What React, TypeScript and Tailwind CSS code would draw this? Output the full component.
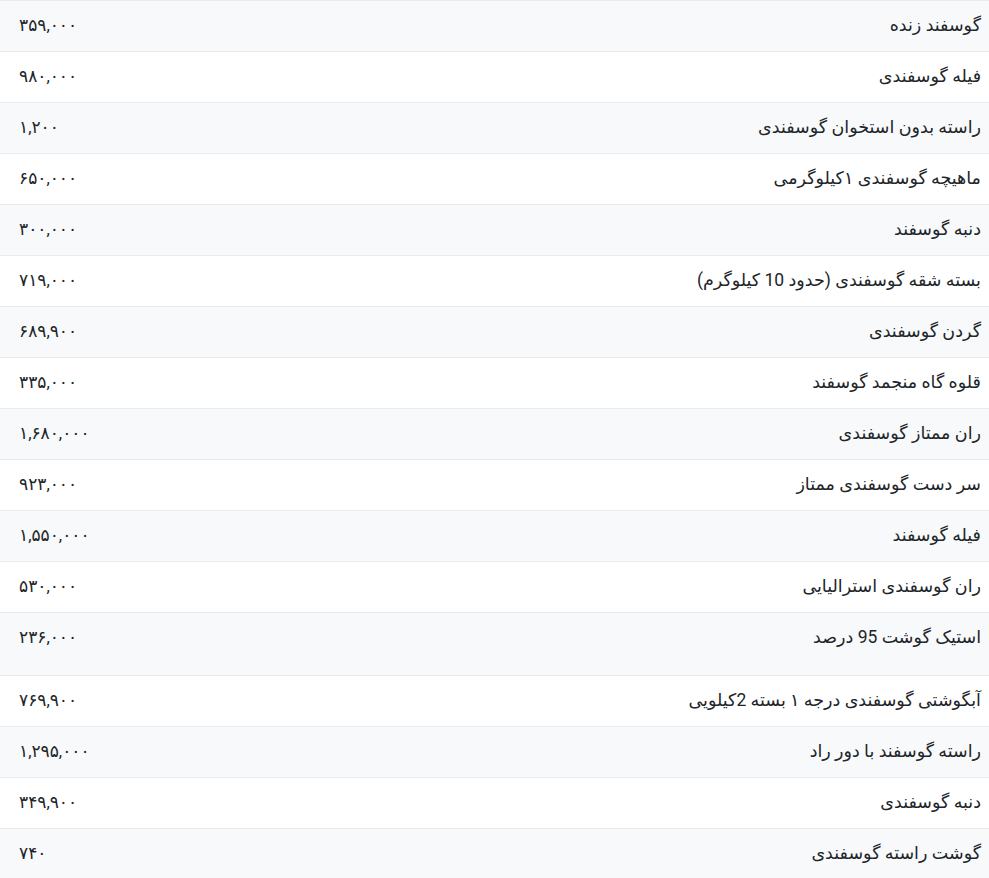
import React from "react";

const rows: { name: string; price: string; tall?: boolean }[] = [
  { name: "گوسفند زنده", price: "۳۵۹,۰۰۰" },
  { name: "فیله گوسفندی", price: "۹۸۰,۰۰۰" },
  { name: "راسته بدون استخوان گوسفندی", price: "۱,۲۰۰" },
  { name: "ماهیچه گوسفندی ۱کیلوگرمی", price: "۶۵۰,۰۰۰" },
  { name: "دنبه گوسفند", price: "۳۰۰,۰۰۰" },
  { name: "بسته شقه گوسفندی (حدود 10 کیلوگرم)", price: "۷۱۹,۰۰۰" },
  { name: "گردن گوسفندی", price: "۶۸۹,۹۰۰" },
  { name: "قلوه گاه منجمد گوسفند", price: "۳۳۵,۰۰۰" },
  { name: "ران ممتاز گوسفندی", price: "۱,۶۸۰,۰۰۰" },
  { name: "سر دست گوسفندی ممتاز", price: "۹۲۳,۰۰۰" },
  { name: "فیله گوسفند", price: "۱,۵۵۰,۰۰۰" },
  { name: "ران گوسفندی استرالیایی", price: "۵۳۰,۰۰۰" },
  { name: "استیک گوشت 95 درصد", price: "۲۳۶,۰۰۰", tall: true },
  { name: "آبگوشتی گوسفندی درجه ۱ بسته 2کیلویی", price: "۷۶۹,۹۰۰" },
  { name: "راسته گوسفند با دور راد", price: "۱,۲۹۵,۰۰۰" },
  { name: "دنبه گوسفندی", price: "۳۴۹,۹۰۰" },
  { name: "گوشت راسته گوسفندی", price: "۷۴۰" },
];

export default function App() {
  return (
    <div
      className="w-[989px] bg-white text-[#212529] leading-[24px]"
      style={{ fontFamily: "Roboto, 'DejaVu Sans', sans-serif" }}
    >
      <div className="border-t border-[#e9ecef]">
        {rows.map((r, i) => (
          <div
            key={i}
            dir="rtl"
            className={`flex items-start justify-between border-b border-[#e9ecef] pt-[12px] ${
              r.tall ? "h-[63px]" : "h-[51px]"
            } ${i % 2 === 0 ? "bg-[#f8f9fb]" : "bg-white"}`}
          >
            <div className="pr-[8px] text-[17.5px]">{r.name}</div>
            <div dir="ltr" className="pl-[19px] w-[200px] text-left text-[17px]">
              {r.price}
            </div>
          </div>
        ))}
      </div>
    </div>
  );
}
